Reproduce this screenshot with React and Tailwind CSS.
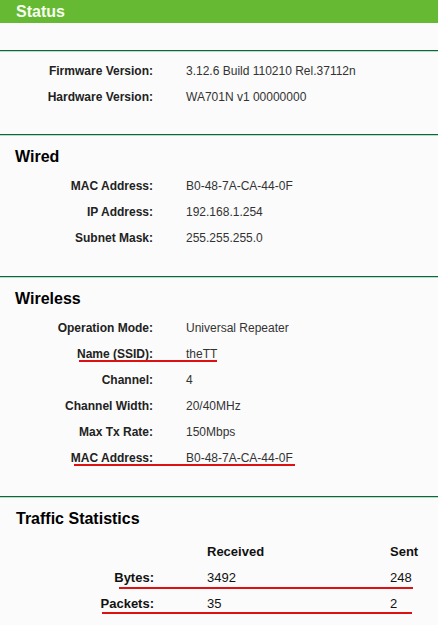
import React from "react";

const font = { fontFamily: '"Liberation Sans", Arial, sans-serif' };

const Divider = () => (
  <div>
    <div className="h-px bg-[#1e5e3c]" />
    <div className="h-px bg-[#a8e6c8]" />
  </div>
);

const Row = ({ label, value, mark }) => (
  <div className="relative flex h-[26px] items-center text-[12px]">
    <div className="w-[153px] text-right font-bold text-[#222]">{label}</div>
    <div className="pl-[33px] text-[#333]">{value}</div>
    {mark && (
      <div
        className="absolute top-[19px] h-[2px] bg-[#dd1111]"
        style={{ left: mark[0], width: mark[1] - mark[0] }}
      />
    )}
  </div>
);

const Heading = ({ children }) => (
  <div className="flex h-[22px] items-center pl-[15px] text-[16px] font-bold text-black">
    {children}
  </div>
);

const TrafficRow = ({ label, received, sent, mark, head }) => (
  <div className="relative flex h-[26px] items-center text-[13px] text-[#111]">
    <div className="w-[154px] text-right font-bold">{label}</div>
    <div className={`w-[236px] pl-[53px] ${head ? "font-bold" : ""}`}>{received}</div>
    <div className={head ? "font-bold" : ""}>{sent}</div>
    {mark && (
      <div
        className="absolute h-[2px] bg-[#dd1111]"
        style={{ left: mark[0], width: mark[1] - mark[0], top: mark[2] }}
      />
    )}
  </div>
);

export default function App() {
  return (
    <div className="min-h-[625px] w-[438px] bg-[#fbfbfb]" style={font}>
      <div className="flex h-[23px] items-center bg-[#66b933] pl-[16px] text-[16px] font-bold text-[#f6ffef]">
        Status
      </div>

      <div className="h-[27px]" />
      <Divider />

      <div className="pt-[6px] pb-[24px]">
        <Row label="Firmware Version:" value="3.12.6 Build 110210 Rel.37112n" />
        <Row label="Hardware Version:" value="WA701N v1 00000000" />
      </div>
      <Divider />

      <div className="pt-[10px] pb-[25px]">
        <Heading>Wired</Heading>
        <div className="pt-[5px]">
          <Row label="MAC Address:" value="B0-48-7A-CA-44-0F" />
          <Row label="IP Address:" value="192.168.1.254" />
          <Row label="Subnet Mask:" value="255.255.255.0" />
        </div>
      </div>
      <Divider />

      <div className="pt-[10px] pb-[25px]">
        <Heading>Wireless</Heading>
        <div className="pt-[5px]">
          <Row label="Operation Mode:" value="Universal Repeater" />
          <Row label="Name (SSID):" value="theTT" mark={[79, 217]} />
          <Row label="Channel:" value="4" />
          <Row label="Channel Width:" value="20/40MHz" />
          <Row label="Max Tx Rate:" value="150Mbps" />
          <Row label="MAC Address:" value="B0-48-7A-CA-44-0F" mark={[74, 295]} />
        </div>
      </div>
      <Divider />

      <div className="pt-[10px]">
        <div className="flex h-[22px] items-center pl-[16px] text-[16px] font-bold text-black">
          Traffic Statistics
        </div>
        <div className="pt-[9px]">
          <TrafficRow head label="" received="Received" sent="Sent" />
          <TrafficRow label="Bytes:" received="3492" sent="248" mark={[119, 413, 22]} />
          <TrafficRow label="Packets:" received="35" sent="2" mark={[102, 412, 21]} />
        </div>
      </div>
    </div>
  );
}
